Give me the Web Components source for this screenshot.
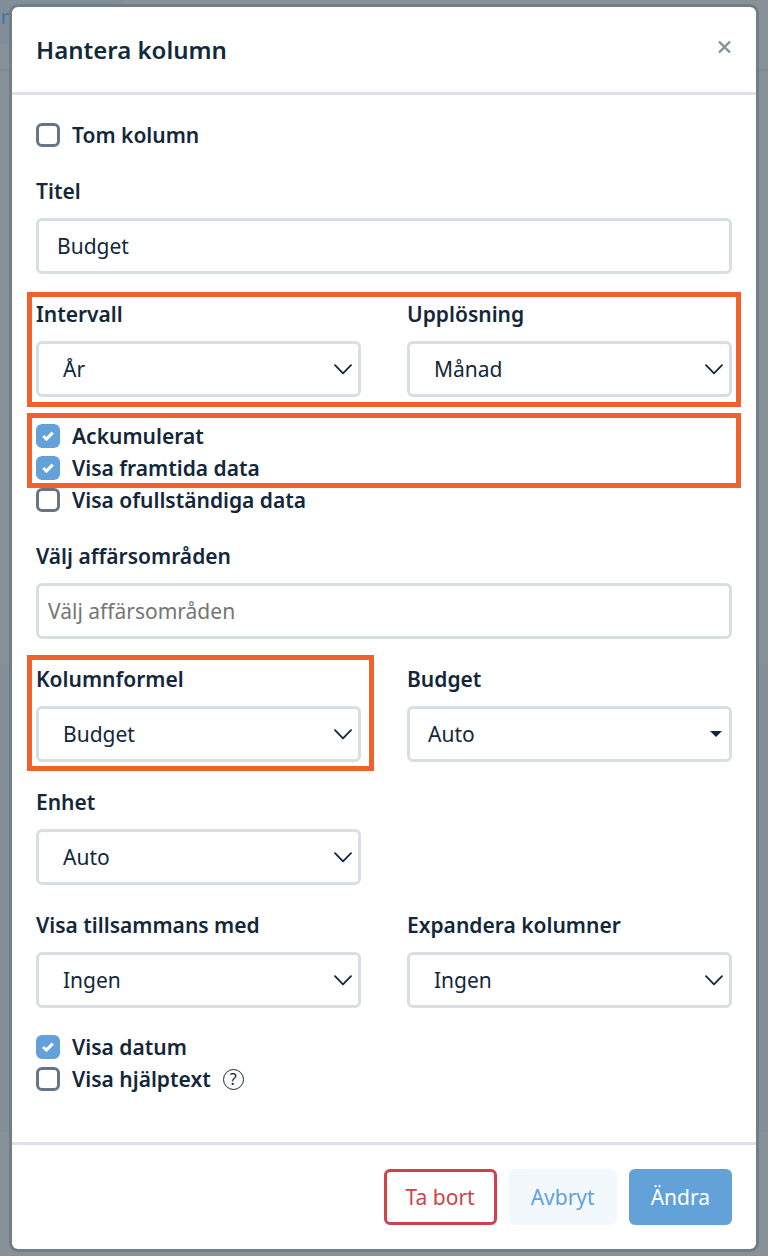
<!DOCTYPE html>
<html lang="sv">
<head>
<meta charset="utf-8">
<meta name="viewport" content="width=device-width, initial-scale=1">
<title>Hantera kolumn</title>
<style>
  :root {
    --ink: #14273a;
    --line: #d8dfe3;
    --blue: #62a2d8;
    --red: #cf4249;
    --mark: #f0622b;
  }
  * { box-sizing: border-box; }
  html { height: 100%; }
  body {
    margin: 0;
    min-height: 100%;
    background: #899198;
    color: var(--ink);
    font: 400 21px/24px "Noto Sans", sans-serif;
  }
</style>
</head>
<body>
<page-backdrop>
  <column-dialog heading="Hantera kolumn">
    <check-group><check-item label="Tom kolumn"></check-item></check-group>
    <text-field label="Titel" value="Budget"></text-field>
    <mark-area style="--mark-inset: -6px -9px -10px">
      <field-row>
        <select-field label="Intervall" options="År,Kvartal,Månad"></select-field>
        <select-field label="Upplösning" options="Månad,Kvartal,År"></select-field>
      </field-row>
    </mark-area>
    <check-group>
      <mark-area style="--mark-inset: -7px -9px -4px">
        <check-item label="Ackumulerat" checked></check-item>
        <check-item label="Visa framtida data" checked></check-item>
      </mark-area>
      <check-item label="Visa ofullständiga data"></check-item>
    </check-group>
    <text-field label="Välj affärsområden" placeholder="Välj affärsområden"></text-field>
    <field-row>
      <mark-area style="--mark-inset: -8px -13px -9px -9px">
        <select-field label="Kolumnformel" options="Budget,Utfall"></select-field>
      </mark-area>
      <select-field label="Budget" options="Auto" variant="caret"></select-field>
    </field-row>
    <field-row>
      <select-field label="Enhet" options="Auto,kr,%"></select-field>
    </field-row>
    <field-row>
      <select-field label="Visa tillsammans med" options="Ingen"></select-field>
      <select-field label="Expandera kolumner" options="Ingen"></select-field>
    </field-row>
    <check-group>
      <check-item label="Visa datum" checked></check-item>
      <check-item label="Visa hjälptext"><help-button slot="after"></help-button></check-item>
    </check-group>
    <action-button slot="actions" kind="danger">Ta bort</action-button>
    <action-button slot="actions" kind="light">Avbryt</action-button>
    <action-button slot="actions" kind="primary">Ändra</action-button>
  </column-dialog>
</page-backdrop>

<script>
const define = (name, render) => customElements.define(name, class extends HTMLElement {
  constructor() {
    super();
    this.attachShadow({ mode: 'open' });
  }
  connectedCallback() {
    this.shadowRoot.innerHTML = '<style>*{box-sizing:border-box}</style>' + render(this);
  }
});
const attr = (el, name) => el.getAttribute(name) || '';

define('page-backdrop', () => `
  <style>
    :host { display: block; position: relative; min-height: 100vh; padding: 4px 9px; overflow: hidden; }
    .nav { position: absolute; inset: 0 0 auto; height: 71px; border-bottom: 2px solid #7f8992; }
    .tab { width: 124px; height: 44px; padding-top: 5px; background: #7f8e98; }
    .tab a { display: block; width: 13px; overflow: hidden; direction: rtl; white-space: nowrap;
      color: #3f76a3; text-decoration: none; font-size: 20px; }
    .panel { position: absolute; inset: 664px 0 auto; height: 468px; background: #838f98; }
    .content { position: relative; }
  </style>
  <div class="nav"><div class="tab"><a href="#">an</a></div></div>
  <div class="panel"></div>
  <div class="content"><slot></slot></div>`);

define('column-dialog', el => `
  <style>
    :host { display: block; border: 3px solid #707e86; border-radius: 9px; background: #fff; }
    header { display: flex; justify-content: space-between; align-items: center; height: 88px;
      padding: 0 24px; border-bottom: 3px solid #dee2e8; }
    h1 { margin: 0; font-size: 24px; line-height: 32px; font-weight: 600; color: #102a3c; }
    .close { display: flex; margin-bottom: 6px; padding: 0; border: 0; background: none; }
    form { display: grid; gap: 24px; padding: 25px 24px 47px; }
    footer { display: flex; justify-content: flex-end; gap: 12px; padding: 24px;
      border-top: 3px solid #dee2e8; }
  </style>
  <section role="dialog" aria-labelledby="h">
    <header>
      <h1 id="h">${attr(el, 'heading')}</h1>
      <button class="close" type="button" aria-label="Stäng">
        <svg width="15" height="14" viewBox="0 0 15 14" fill="none" stroke="#84909a" stroke-width="2.4">
          <path d="M2 1.5 13 12.5M13 1.5 2 12.5"/></svg>
      </button>
    </header>
    <form><slot></slot></form>
    <footer><slot name="actions"></slot></footer>
  </section>`);

define('field-row', () => `
  <style>:host { display: grid; grid-template-columns: 1fr 1fr; column-gap: 46px; }</style>
  <slot></slot>`);

/* Orange frame drawn over whatever it surrounds */
define('mark-area', () => `
  <style>
    :host { display: block; position: relative; }
    :host::after { content: ""; position: absolute; inset: var(--mark-inset);
      border: 5px solid var(--mark); pointer-events: none; z-index: 1; }
  </style>
  <slot></slot>`);

define('check-group', () => `
  <style>:host { display: block; margin-top: -1px; }</style>
  <slot></slot>`);

define('check-item', el => `
  <style>
    :host { display: flex; align-items: center; height: 32px; }
    label { display: flex; align-items: center; gap: 12px; font-weight: 650; white-space: nowrap; }
    .box { display: grid; width: 24px; height: 24px; }
    .box > * { grid-area: 1 / 1; }
    input { appearance: none; width: 24px; height: 24px; margin: 0; border: 3px solid #687585;
      border-radius: 6px; background: #fff; }
    input:checked { border-color: var(--blue); background: var(--blue); }
    svg { display: none; place-self: center; pointer-events: none; }
    input:checked + svg { display: block; }
  </style>
  <label>
    <span class="box">
      <input type="checkbox" ${el.hasAttribute('checked') ? 'checked' : ''}>
      <svg width="12" height="10" viewBox="0 0 12 10" fill="none" stroke="#fff" stroke-width="3">
        <path d="M1.2 5 4.4 8.1 10.8 1.6"/></svg>
    </span>
    <span>${attr(el, 'label')}</span>
  </label>
  <slot name="after"></slot>`);

define('help-button', () => `
  <style>
    :host { display: block; margin-left: 12px; }
    button { display: grid; place-items: center; width: 21px; height: 21px; padding: 0;
      border: 1px solid var(--ink); border-radius: 50%; background: none; color: inherit;
      font: 400 16px/18px "Noto Sans", sans-serif; }
  </style>
  <button type="button" aria-label="Hjälp">?</button>`);

const fieldStyle = `
  :host { display: grid; gap: 15px; padding-top: 4px; }
  label { font-weight: 650; }
  input, select { appearance: none; display: block; width: 100%; height: 56px; margin: 0;
    border: 3px solid var(--line); border-radius: 6px; background: #fff; color: inherit;
    font: inherit; line-height: 32px; outline: 0; }`;

define('text-field', el => `
  <style>${fieldStyle}
    input { padding: 0 18px; }
    input[placeholder] { padding: 0 9px; }
    input::placeholder { color: #757575; opacity: 1; }
  </style>
  <label for="f">${attr(el, 'label')}</label>
  <input id="f" type="text" value="${attr(el, 'value')}"
    ${el.hasAttribute('placeholder') ? `placeholder="${attr(el, 'placeholder')}"` : ''}>`);

define('select-field', el => {
  const caret = attr(el, 'variant') === 'caret';
  return `
  <style>${fieldStyle}
    .control { display: grid; align-items: center; }
    .control > * { grid-area: 1 / 1; }
    select { padding: 0 40px 0 ${caret ? 18 : 24}px; }
    svg { justify-self: end; margin-right: ${caret ? 10 : 9}px; pointer-events: none; }
  </style>
  <label for="f">${attr(el, 'label')}</label>
  <div class="control">
    <select id="f">${attr(el, 'options').split(',').map(o => `<option>${o}</option>`).join('')}</select>
    ${caret
      ? '<svg width="12" height="6" viewBox="0 0 12 6" fill="#14273a"><path d="M0 0H12L6 6Z"/></svg>'
      : '<svg width="18" height="11" viewBox="0 0 18 11" fill="none" stroke="#14273a" stroke-width="1.8" stroke-linecap="round" stroke-linejoin="round"><path d="M1 1.2 9 9.4 17 1.2"/></svg>'}
  </div>`;
});

define('action-button', () => `
  <style>
    :host { display: block; }
    button { height: 56px; padding: 0 19px; border: 3px solid transparent; border-radius: 6px;
      font: inherit; }
    :host([kind=danger]) button { border-color: var(--red); background: #fff; color: var(--red); }
    :host([kind=light]) button { border-color: #f3f8fd; background: #f3f8fd; color: var(--blue); }
    :host([kind=primary]) button { border-color: var(--blue); background: var(--blue); color: #fff; }
  </style>
  <button type="button"><slot></slot></button>`);
</script>
</body>
</html>
